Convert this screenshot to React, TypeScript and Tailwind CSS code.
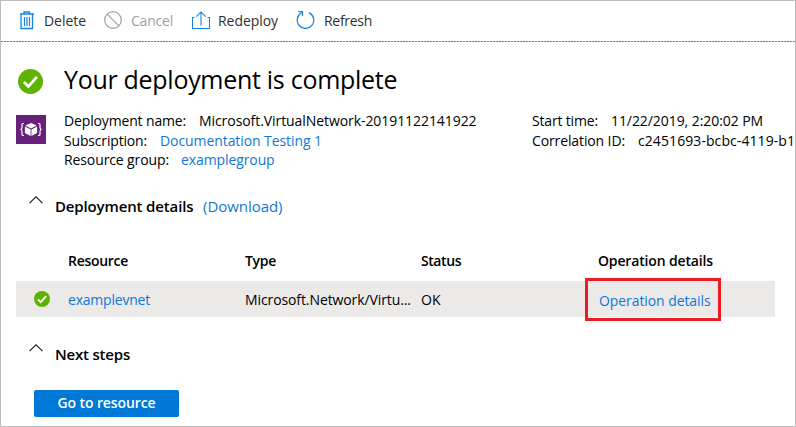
import type { ReactNode } from "react";

function Check({ className }: { className: string }) {
  return (
    <svg viewBox="0 0 24 24" className={className} fill="none">
      <circle cx="12" cy="12" r="12" fill="#5db300" />
      <path d="M5.7 12.4 10 16.8 18.2 7.6" stroke="#fff" strokeWidth="2.7" />
    </svg>
  );
}

function TrashIcon() {
  return (
    <svg width="16" height="19" viewBox="0 0 16 19" fill="none" stroke="#1684dc" className="block">
      <path d="M1 3h14M5 2.8V1h5.5v1.8M2 3.5v14h11.5v-14" strokeWidth="1.3" />
      <path d="M5.5 6v9M8 6v9M10.5 6v9" strokeWidth="1.2" />
    </svg>
  );
}

function CancelIcon() {
  return (
    <svg width="18" height="18" viewBox="0 0 18 18" fill="none" stroke="#a19f9d" strokeWidth="1.2" className="block">
      <circle cx="9" cy="9" r="8.3" />
      <path d="M3.1 3.1 14.9 14.9" />
    </svg>
  );
}

function RedeployIcon() {
  return (
    <svg width="18" height="18" viewBox="0 0 18 18" fill="none" stroke="#1684dc" strokeWidth="1.1" className="block">
      <path d="M2.5 6.5h-2v11h17v-11h-2M9 14.5V1M4.2 5.6 9 .9l4.8 4.7" />
    </svg>
  );
}

function RefreshIcon() {
  return (
    <svg width="19" height="18" viewBox="0 0 19 18" fill="none" stroke="#1684dc" strokeWidth="1.2" className="block">
      <path d="M13 1.6A8.3 8.3 0 1 1 5.6 1.8M2.3.7h4.2v4.2" />
    </svg>
  );
}

function BracesCube() {
  return (
    <svg width="30" height="29" viewBox="0 0 30 29" className="block">
      <path d="M0 0h30v29H0z" fill="#68217a" />
      <path d="M8 8.5H7.2Q6 8.5 6 9.8v2.7q0 2-1.6 2 1.6 0 1.6 2v2.7q0 1.3 1.2 1.3H8M22 8.5h.8q1.2 0 1.2 1.3v2.7q0 2 1.6 2-1.6 0-1.6 2v2.7q0 1.3-1.2 1.3H22" fill="none" stroke="#fff" strokeWidth="1.2" />
      <path d="m15 8 5.7 2.6L15 13.5l-5.7-2.9zM8.9 11.6l5.7 2.9v6.4l-5.7-2.9zM21.1 11.6l-5.7 2.9v6.4l5.7-2.9z" fill="#fff" />
    </svg>
  );
}

function Chevron() {
  return (
    <svg width="14" height="8" viewBox="0 0 14 8" fill="none" stroke="#222" strokeWidth="1.1" className="block">
      <path d="M.5 7.2 7 .8l6.5 6.4" />
    </svg>
  );
}

function Line({ label, children }: { label: ReactNode; children: ReactNode }) {
  return (
    <div className="flex h-5 items-center whitespace-nowrap">
      {label}
      {children}
    </div>
  );
}

export default function App() {
  return (
    <div className="flex h-[427px] w-[796px] flex-col overflow-hidden border border-[#bcbcbc] bg-white font-['Open_Sans','Noto_Sans',sans-serif] text-[14px] leading-[20px] text-black">
      <div className="flex h-10 shrink-0 pl-[18px] text-[#2f2f2f]">
        <div className="flex w-[85px] pt-[10px]">
          <TrashIcon />
          <span className="ml-[9px] tracking-[-0.04px]">Delete</span>
        </div>
        <div className="flex w-[88px] pt-[10px] text-[#a19f9d]">
          <CancelIcon />
          <span className="ml-[9px] tracking-[-0.21px]">Cancel</span>
        </div>
        <div className="flex w-[104px] pt-[10px]">
          <RedeployIcon />
          <span className="ml-[8px] tracking-[-0.06px]">Redeploy</span>
        </div>
        <div className="flex pt-[10px]">
          <RefreshIcon />
          <span className="ml-[9px] tracking-[-0.29px]">Refresh</span>
        </div>
      </div>
      <div className="h-px shrink-0 bg-[repeating-linear-gradient(90deg,#16a5da_0_2px,#b9d9e6_2px_3px)]" />

      <div className="flex h-[70px] shrink-0 items-start pl-[18px]">
        <Check className="-ml-px mt-[27px] block size-[25px]" />
        <h1 className="ml-[21px] mt-[20px] text-[25px] leading-[34px] tracking-[-0.29px]">Your deployment is complete</h1>
      </div>

      <div className="flex h-[77px] shrink-0 pl-[15px]">
        <div className="mt-[3px] w-[48px] shrink-0">
          <BracesCube />
        </div>
        <div className="-mt-px w-[468px] shrink-0">
          <Line label={<span className="w-[135px] tracking-[-0.15px]">Deployment name:</span>}>
            <span className="tracking-[-0.07px]">Microsoft.VirtualNetwork-20191122141922</span>
          </Line>
          <Line label={<span className="w-[96px] tracking-[-0.17px]">Subscription:</span>}>
            <a className="tracking-[-0.08px] text-[#0f78d4]">Documentation Testing 1</a>
          </Line>
          <div className="-mt-px">
            <Line label={<span className="w-[117px] tracking-[-0.11px]">Resource group:</span>}>
              <a className="tracking-[-0.1px] text-[#0f78d4]">examplegroup</a>
            </Line>
          </div>
        </div>
        <div className="-mt-px">
          <Line label={<span className="w-[79px] shrink-0 tracking-[-0.17px]">Start time:</span>}>
            <span className="tracking-[-0.07px]">11/22/2019, 2:20:02 PM</span>
          </Line>
          <Line label={<span className="w-[106px] shrink-0 tracking-[-0.12px]">Correlation ID:</span>}>
            <span className="tracking-[0.08px]">c2451693-bcbc-4119-b1</span>
          </Line>
        </div>
      </div>

      <div className="flex h-[52px] shrink-0 pl-[28px]">
        <div className="mt-[7px] w-[26px]">
          <Chevron />
        </div>
        <h2 className="mt-[7px] w-[148px] text-[15px] font-semibold tracking-[-0.14px]">Deployment details</h2>
        <a className="mt-[7px] text-[15px] tracking-[-0.04px] text-[#0f78d4]">(Download)</a>
      </div>

      <div className="ml-[15px] w-[759px] shrink-0">
        <div className="grid h-[40px] grid-cols-[52px_177px_176px_177px_1fr] items-center font-semibold">
          <span />
          <span className="tracking-[-0.29px]">Resource</span>
          <span className="tracking-[-0.3px]">Type</span>
          <span className="tracking-[-0.43px]">Status</span>
          <span className="tracking-[-0.15px]">Operation details</span>
        </div>
        <div className="grid h-[36px] grid-cols-[52px_177px_176px_164px_1fr] items-center bg-[#ebeae9]">
          <Check className="ml-[18px] block size-4" />
          <a className="pt-[2px] tracking-[-0.21px] text-[#0f78d4]">examplevnet</a>
          <span className="pt-[2px] tracking-[-0.1px]">Microsoft.Network/Virtu...</span>
          <span className="pt-[2px] tracking-[0.1px]">OK</span>
          <div className="-my-1 flex h-[43px] w-[136px] items-center border-[3px] border-[#ed1c24] pl-[11px] pt-[3px]">
            <a className="tracking-[-0.08px] text-[#0f78d4]">Operation details</a>
          </div>
        </div>
      </div>

      <div className="flex h-[73px] shrink-0 pl-[28px]">
        <div className="mt-[27px] w-[26px]">
          <Chevron />
        </div>
        <h2 className="mt-[27px] text-[15px] font-semibold tracking-[-0.2px]">Next steps</h2>
      </div>
      <button className="ml-[33px] h-[27px] w-[145px] shrink-0 rounded-[2px] bg-[#0078d7] pb-px font-semibold leading-[24px] tracking-[-0.11px] text-white">Go to resource</button>
    </div>
  );
}
